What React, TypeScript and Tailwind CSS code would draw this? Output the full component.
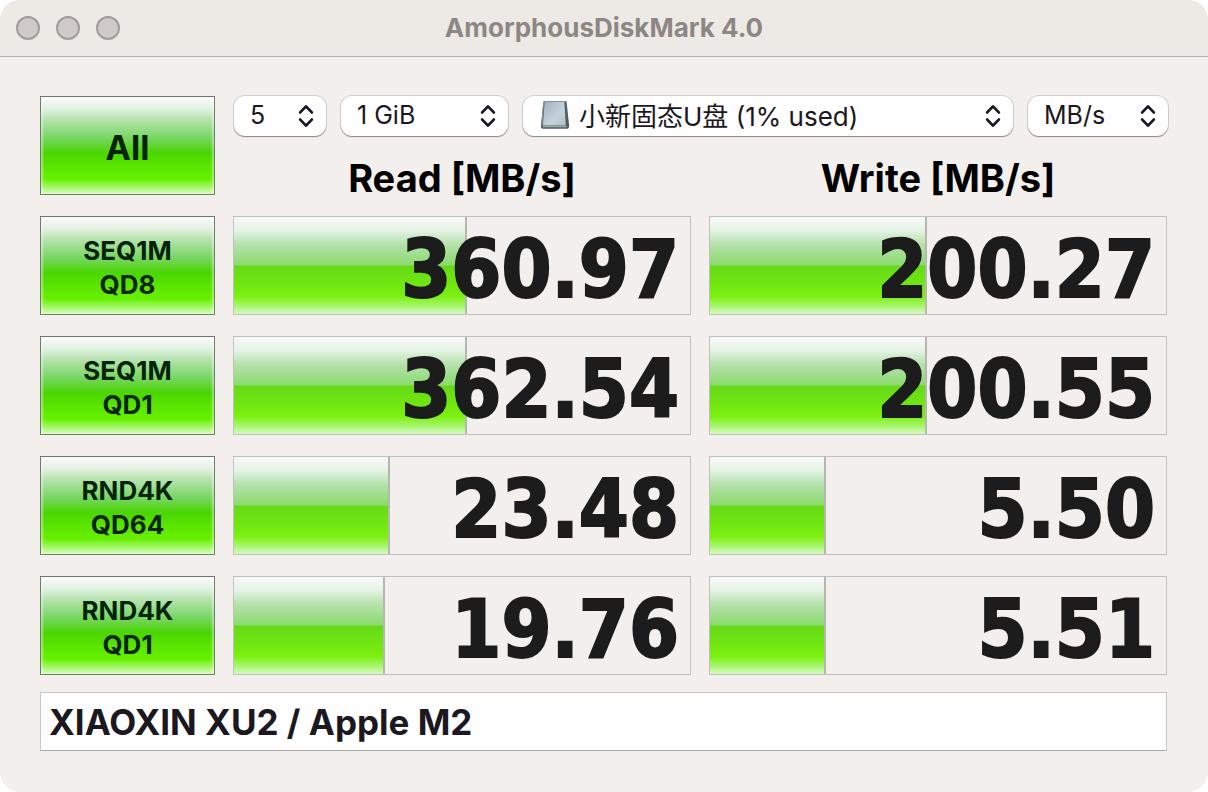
import { useState, type ReactNode } from 'react';

type Result = { value: string; fill: number };
type Test = { name: string; depth: string; read: Result; write: Result };

const tests: Test[] = [
  { name: 'SEQ1M', depth: 'QD8', read: { value: '360.97', fill: 51.2 }, write: { value: '200.27', fill: 47.5 } },
  { name: 'SEQ1M', depth: 'QD1', read: { value: '362.54', fill: 51.2 }, write: { value: '200.55', fill: 47.5 } },
  { name: 'RND4K', depth: 'QD64', read: { value: '23.48', fill: 34.3 }, write: { value: '5.50', fill: 25.4 } },
  { name: 'RND4K', depth: 'QD1', read: { value: '19.76', fill: 33.2 }, write: { value: '5.51', fill: 25.4 } },
];

const columns = 'grid grid-cols-[175px_1fr_1fr] gap-x-[18px]';

function GreenButton({ children, className }: { children: ReactNode; className: string }) {
  return (
    <button
      type="button"
      className={
        'flex h-[99px] w-full flex-col items-center justify-center border border-[#6f7a6c] bg-[linear-gradient(180deg,#f8fbf9_0%,#e8f4ea_10%,#b4e2ac_24%,#78d664_42%,#4ad600_58%,#5ce600_72%,#66f000_84%,#a0f766_93%,#dcfbc4_100%)] pt-1 font-bold text-[#04240a] shadow-[inset_2px_0_2px_rgba(255,255,255,0.4),inset_-2px_0_2px_rgba(255,255,255,0.4)] ' +
        className
      }
    >
      {children}
    </button>
  );
}

function Popup({
  label,
  options,
  className,
  selectClass,
  icon,
}: {
  label: string;
  options: string[];
  className: string;
  selectClass: string;
  icon?: ReactNode;
}) {
  const [value, setValue] = useState(options[0]);
  return (
    <div className={'relative h-10 ' + className}>
      <select
        aria-label={label}
        value={value}
        onChange={(e) => setValue(e.target.value)}
        className={
          'h-10 w-full appearance-none rounded-[11px] bg-[#fefefe] pr-9 text-[#1b1722] shadow-[0_0_0_1px_rgba(0,0,0,0.12),0_1px_1px_rgba(0,0,0,0.35)] ' +
          selectClass
        }
      >
        {options.map((o) => (
          <option key={o}>{o}</option>
        ))}
      </select>
      {icon}
      <svg
        aria-hidden="true"
        viewBox="0 0 16 24"
        className="pointer-events-none absolute top-2 right-3 h-6 w-4"
        fill="none"
        stroke="#1b1722"
        strokeWidth="2.8"
        strokeLinecap="round"
        strokeLinejoin="round"
      >
        <path d="M2.2 8.4 8 2.4l5.8 6M2.2 15.6l5.8 6 5.8-6" />
      </svg>
    </div>
  );
}

function DiskIcon() {
  return (
    <svg aria-hidden="true" viewBox="0 0 30 30" className="pointer-events-none absolute top-1 left-[17px] size-[30px]">
      <defs>
        <linearGradient id="disk" x1="0" y1="0" x2="1" y2="1">
          <stop offset="0" stopColor="#9fb1bf" />
          <stop offset="0.6" stopColor="#c6d2da" />
          <stop offset="1" stopColor="#b4c1ca" />
        </linearGradient>
      </defs>
      <path d="M3.5 1.2h23l2.6 24.3q.2 3.2-2.2 3.3H3.1Q.8 28.7.9 25.5Z" fill="#4f5d61" />
      <path d="M4.6 1.8h19.8l1.4 23.8H2.9Z" fill="url(#disk)" />
      <path d="M2.8 26.6h23.8" stroke="#93aaa8" strokeWidth="1.4" />
      <path d="M3.6 2 1.8 25.500" stroke="#8b9994" strokeWidth="1" />
    </svg>
  );
}

function ResultCell({ result }: { result: Result }) {
  return (
    <td className="relative flex h-[99px] items-center justify-end border border-[#c2c0bc] pt-2 pr-[11px] pb-0">
      <div
        className="absolute inset-y-0 left-0 border-r-2 border-[#b4b8b0] bg-[linear-gradient(180deg,#f7faf8_0%,#e8f4e8_13%,#b6e2ac_28%,#8cda70_49%,#66da18_51%,#70e612_68%,#7cf010_82%,#a8f670_92%,#d8f8c4_100%)]"
        style={{ width: `${result.fill}%` }}
      />
      <span className="relative font-[DejaVu_Sans_Condensed,DejaVu_Sans,sans-serif] text-[80px] leading-[90px] font-bold text-[#1c1c1c] font-stretch-condensed [-webkit-text-stroke:2px_#1c1c1c]">
        {result.value}
      </span>
    </td>
  );
}

function ColumnHeading({ name }: { name: string }) {
  return (
    <th scope="col" className="flex h-[60px] items-end justify-center p-0 text-[38px] leading-9 font-bold text-black">
      {name} [MB/s]
    </th>
  );
}

function WindowButton({ label }: { label: string }) {
  return (
    <button type="button" aria-label={label} className="size-6 rounded-full border-2 border-[#a09b98] bg-[#cfcac7]" />
  );
}

export default function App() {
  return (
    <div className="bg-white font-[Inter,'Noto_Sans_CJK_SC',sans-serif]">
      <main className="flex min-h-screen flex-col overflow-hidden rounded-[20px] bg-[#f3efec]">
        <header className="relative flex h-[57px] items-center justify-center border-b border-[#b9b3b0] bg-[#ede9e5]">
          <div className="absolute left-4 flex gap-4">
            <WindowButton label="Close" />
            <WindowButton label="Minimize" />
            <WindowButton label="Zoom" />
          </div>
          <h1 className="text-[26px] leading-8 font-bold text-[#8c8784]">AmorphousDiskMark 4.0</h1>
        </header>

        <div className="flex flex-col gap-[17px] pt-[39px] pr-[41px] pb-10 pl-10">
          <table className="flex flex-col gap-[21px]">
            <thead className={columns + ' h-[99px]'}>
              <tr className="contents">
                <td className="row-span-2 p-0">
                  <GreenButton className="text-[34px]">All</GreenButton>
                </td>
                <td className="col-span-2 -mr-px ml-px flex h-10 gap-[15px] p-0">
                  <Popup
                    label="Test count"
                    options={['5', '1', '3', '9']}
                    className="w-[92px]"
                    selectClass="pl-4 text-[25px]"
                  />
                  <Popup
                    label="Test size"
                    options={['1 GiB', '2 GiB', '4 GiB']}
                    className="w-[167px]"
                    selectClass="pl-4 text-[25px]"
                  />
                  <Popup
                    label="Volume"
                    options={['小新固态U盘 (1% used)']}
                    className="flex-1"
                    selectClass="pl-14 text-[26px]"
                    icon={<DiskIcon />}
                  />
                  <Popup
                    label="Unit"
                    options={['MB/s', 'GB/s', 'IOPS']}
                    className="w-[140px]"
                    selectClass="pl-4 text-[25px]"
                  />
                </td>
              </tr>
              <tr className="contents">
                <ColumnHeading name="Read" />
                <ColumnHeading name="Write" />
              </tr>
            </thead>
            <tbody className="flex flex-col gap-[21px]">
              {tests.map((t) => (
                <tr key={t.name + t.depth} className={columns}>
                  <th scope="row" className="p-0">
                    <GreenButton className="text-[26px] leading-[34px]">
                      <span>{t.name}</span>
                      <span>{t.depth}</span>
                    </GreenButton>
                  </th>
                  <ResultCell result={t.read} />
                  <ResultCell result={t.write} />
                </tr>
              ))}
            </tbody>
          </table>
          <input
            aria-label="Comment"
            defaultValue="XIAOXIN XU2 / Apple M2"
            className="h-[59px] w-full border border-[#c9c5c3] border-b-[#a9a5a3] bg-[#fefefe] px-2 text-[35px] font-bold text-[#1b1822] outline-none"
          />
        </div>
      </main>
    </div>
  );
}
